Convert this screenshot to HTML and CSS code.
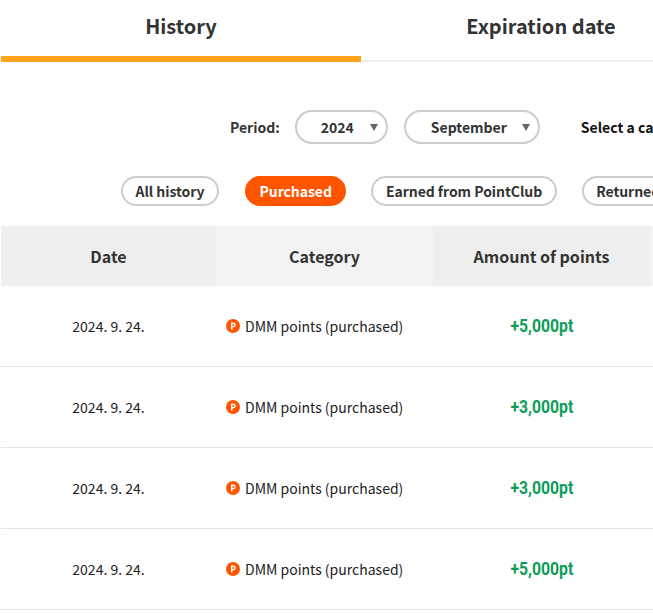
FILE: index.html
```html
<!DOCTYPE html>
<html lang="en">
<head>
<meta charset="utf-8">
<title>Point history</title>
<link rel="stylesheet" href="styles.css">
</head>
<body>
<div class="page">
  <nav class="tabs">
    <a class="tab tab-active">History</a>
    <a class="tab">Expiration date</a>
  </nav>
  <div class="filters">
    <span class="label">Period:</span>
    <div class="select select-year"><span>2024</span><i class="caret"></i></div>
    <div class="select select-month"><span>September</span><i class="caret"></i></div>
    <span class="label label-cat">Select a category:</span>
  </div>
  <div class="chips">
    <span class="chip chip-all">All history</span>
    <span class="chip chip-on">Purchased</span>
    <span class="chip">Earned from PointClub</span>
    <span class="chip">Returned</span>
  </div>
  <div class="table">
    <div class="row head">
      <div class="cell">Date</div>
      <div class="cell alt">Category</div>
      <div class="cell">Amount of points</div>
      <div class="cell alt"></div>
    </div>
    <div class="row">
      <div class="cell date">2024. 9. 24.</div>
      <div class="cell cat"><svg class="pt" viewBox="0 0 14 14"><circle cx="7" cy="7" r="7" fill="#ff5500"/><path fill-rule="evenodd" d="M5 10.5V3.6h2.4a2.3 2.3 0 0 1 0 4.6H6.5v2.3zM6.5 4.9v2h.8a1 1 0 0 0 0-2z" fill="#fff"/></svg>DMM points (purchased)</div>
      <div class="cell amt"><span class="amt-text">+5,000pt</span></div>
      <div class="cell"></div>
    </div>
    <div class="row">
      <div class="cell date">2024. 9. 24.</div>
      <div class="cell cat"><svg class="pt" viewBox="0 0 14 14"><circle cx="7" cy="7" r="7" fill="#ff5500"/><path fill-rule="evenodd" d="M5 10.5V3.6h2.4a2.3 2.3 0 0 1 0 4.6H6.5v2.3zM6.5 4.9v2h.8a1 1 0 0 0 0-2z" fill="#fff"/></svg>DMM points (purchased)</div>
      <div class="cell amt"><span class="amt-text">+3,000pt</span></div>
      <div class="cell"></div>
    </div>
    <div class="row">
      <div class="cell date">2024. 9. 24.</div>
      <div class="cell cat"><svg class="pt" viewBox="0 0 14 14"><circle cx="7" cy="7" r="7" fill="#ff5500"/><path fill-rule="evenodd" d="M5 10.5V3.6h2.4a2.3 2.3 0 0 1 0 4.6H6.5v2.3zM6.5 4.9v2h.8a1 1 0 0 0 0-2z" fill="#fff"/></svg>DMM points (purchased)</div>
      <div class="cell amt"><span class="amt-text">+3,000pt</span></div>
      <div class="cell"></div>
    </div>
    <div class="row">
      <div class="cell date">2024. 9. 24.</div>
      <div class="cell cat"><svg class="pt" viewBox="0 0 14 14"><circle cx="7" cy="7" r="7" fill="#ff5500"/><path fill-rule="evenodd" d="M5 10.5V3.6h2.4a2.3 2.3 0 0 1 0 4.6H6.5v2.3zM6.5 4.9v2h.8a1 1 0 0 0 0-2z" fill="#fff"/></svg>DMM points (purchased)</div>
      <div class="cell amt"><span class="amt-text">+5,000pt</span></div>
      <div class="cell"></div>
    </div>
  </div>
</div>
</body>
</html>
```
FILE: styles.css
```css
* { box-sizing: border-box; }
html, body { margin: 0; height: 100%; overflow: hidden; background: #fff; }
body { font-family: "Noto Sans CJK JP", "Noto Sans", sans-serif; color: #333; }
.page { width: 653px; height: 613px; padding-left: 1px; overflow: hidden; }

.tabs { display: flex; width: 720px; height: 62px; border-bottom: 2px solid #eee; }
.tab { flex: 0 0 360px; height: 62px; padding-top: 8px; text-align: center; font-size: 20px; line-height: 36px; font-weight: 700; color: #333; }
.tab-active { border-bottom: 6px solid #ffa31a; }

.filters { display: flex; align-items: center; width: 800px; margin-top: 48px; padding-left: 229px; height: 34px; white-space: nowrap; }
.label { font-size: 14px; font-weight: 700; color: #333; margin-right: 15px; }
.label-cat { color: #111; margin: 0 0 0 41px; }
.select { position: relative; height: 34px; border: 2px solid #ccc; border-radius: 17px; font-size: 14px; font-weight: 700; line-height: 30px; color: #333; }
.select-year { width: 93px; padding-left: 24px; margin-right: 16px; }
.select-month { width: 136px; padding-left: 25px; }
.caret { position: absolute; right: 8px; top: 12px; width: 0; height: 0; border-left: 4px solid transparent; border-right: 4px solid transparent; border-top: 7px solid #666; }

.chips { display: flex; gap: 25px; width: 800px; margin-top: 32px; padding-left: 120px; white-space: nowrap; }
.chip { height: 30px; padding: 0 12.5px; border: 2px solid #ccc; border-radius: 15px; font-size: 14px; font-weight: 700; line-height: 26px; letter-spacing: -0.05px; color: #333; }
.chip-all { margin-right: 1px; }
.chip-on { background: #ff5500; border-color: #ff5500; color: #fff; }

.table { width: 880px; margin-top: 20px; }
.row { display: grid; grid-template-columns: 215px 217px 217px 231px; height: 81px; border-bottom: 1px solid #e5e5e5; }
.head { height: 60px; border-bottom: 0; }
.cell { display: flex; align-items: center; justify-content: center; }
.head .cell { background: #eee; font-size: 16px; font-weight: 700; color: #333; }
.head .alt { background: #f3f3f3; }
.date { font-size: 14px; color: #222; }
.cat { justify-content: flex-start; padding-left: 10px; font-size: 14px; color: #222; }
.pt { width: 14px; height: 14px; margin-right: 5px; flex: none; }
.amt { padding: 0 0 2px 0; font-family: "Roboto", sans-serif; font-size: 19px; font-weight: 700; color: #0d9d58; }
.amt-text { display: inline-block; transform: scaleX(0.83); }
```
